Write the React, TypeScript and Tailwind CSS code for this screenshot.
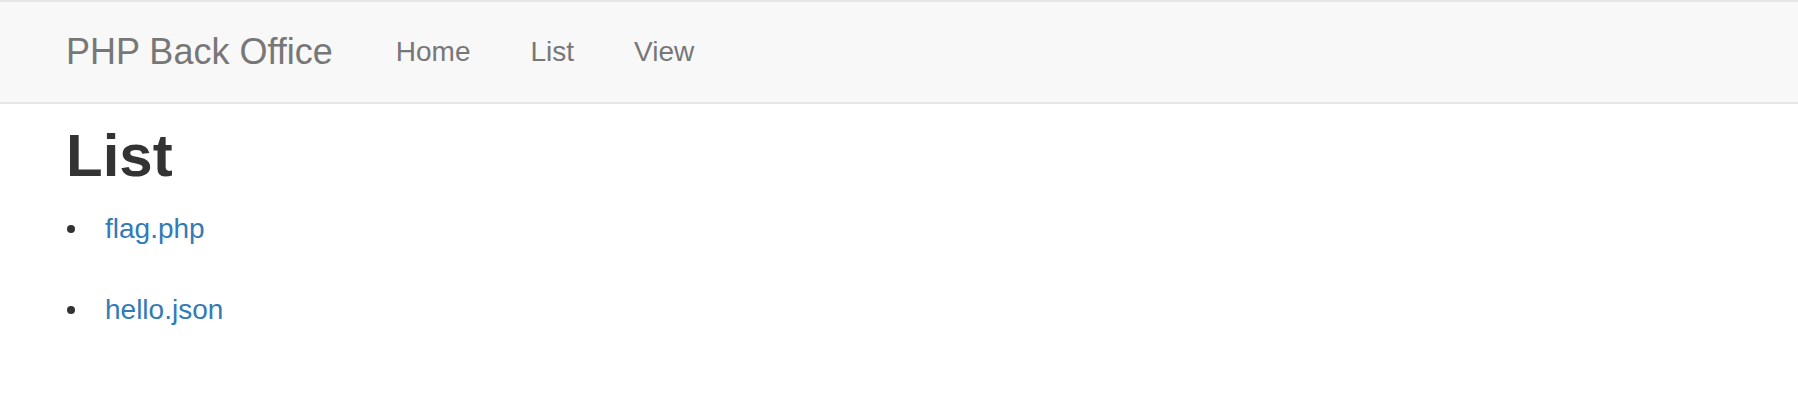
import React from 'react';

const files = ['flag.php', 'hello.json'];

export default function App() {
  return (
    <div className="min-h-[418px] bg-white text-[#333] font-['Liberation_Sans',Arial,sans-serif]">
      <nav className="h-[104px] border-y-2 border-[#e7e7e7] bg-[#f8f8f8]">
        <div className="flex h-full pl-[36px]">
          <a href="#" className="block pl-[30px] pr-[33px] pt-[30px] text-[36px] leading-[40px] text-[#777]">
            PHP Back Office
          </a>
          <ul className="flex">
            {['Home', 'List', 'View'].map((item) => (
              <li key={item}>
                <a href="#" className="block px-[30px] pt-[30px] text-[28px] leading-[40px] text-[#777]">
                  {item}
                </a>
              </li>
            ))}
          </ul>
        </div>
      </nav>
      <div className="pl-[66px]">
        <h2 className="mt-[19px] mb-[20px] text-[60px] font-bold leading-[66px]">List</h2>
        <ul>
          {files.map((f) => (
            <li key={f} className="mb-[41px] flex items-center text-[28px] leading-[40px]">
              <span className="ml-[1px] mr-[30px] h-[8px] w-[8px] rounded-full bg-[#333]" />
              <a href="#" className="text-[#337ab7]">
                {f}
              </a>
            </li>
          ))}
        </ul>
      </div>
    </div>
  );
}
